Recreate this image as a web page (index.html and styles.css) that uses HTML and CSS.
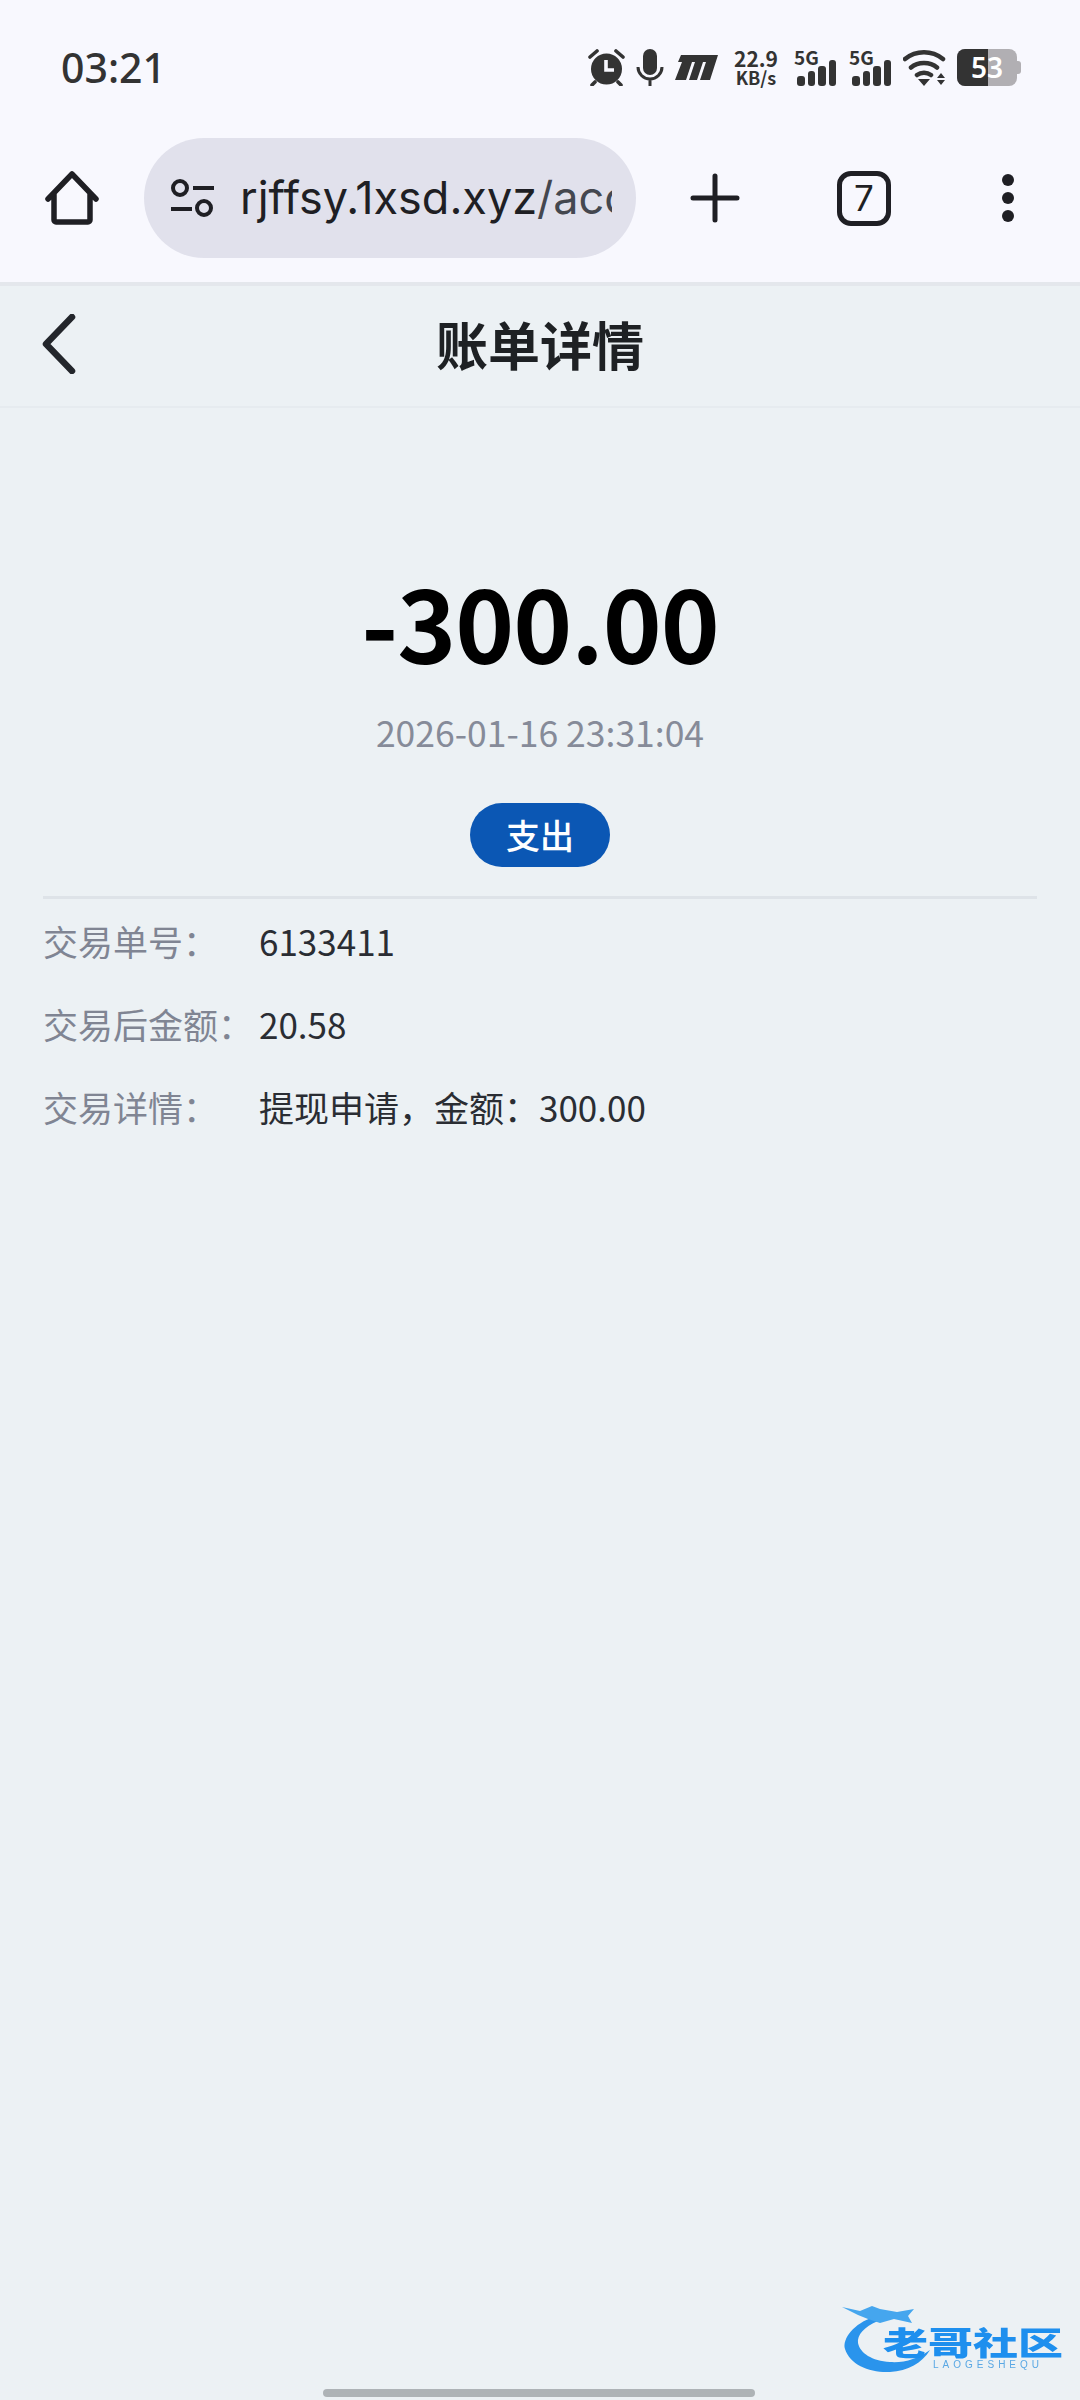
FILE: index.html

```html
<!DOCTYPE html>
<html lang="zh">
<head>
  <meta charset="utf-8">
  <title>账单详情</title>
  <link rel="stylesheet" href="styles.css">
</head>
<body>

<div class="browser">
  <div class="status">
    <span class="time">03:21</span>
    <div class="status-icons">
      <svg width="37" height="37" viewBox="0 0 37 37"><circle cx="18.500" cy="20" r="15.500" fill="#333"/><path d="M18 11v10h8" fill="none" stroke="#f8f8fe" stroke-width="3.600"/><path d="M2 8l7-6M35 8l-7-6M7 33l-3 3M30 33l3 3" stroke="#333" stroke-width="3.600" stroke-linecap="round"/></svg>
      <svg class="mic" width="28" height="37" viewBox="0 0 28 37"><rect x="7" y="0" width="14" height="26" rx="7" fill="#333"/><path d="M2 18a12 12 0 0 0 24 0M14 30v7" fill="none" stroke="#333" stroke-width="3"/></svg>
      <svg class="moto" width="43" height="25" viewBox="0 0 43 25"><path d="M6 0h37l-8 25H25l6-18h-3L22 25h-8l6-18h-3L11 25H0L7 7H3z" fill="#333"/></svg>
      <div class="speed"><span>22.9</span><span>KB/s</span></div>
      <div class="signal">
        <span class="net">5G</span>
        <div class="bars"><i class="b1"></i><i class="b2"></i><i class="b3"></i><i class="b4"></i></div>
      </div>
      <div class="signal">
        <span class="net">5G</span>
        <div class="bars"><i class="b1"></i><i class="b2"></i><i class="b3"></i><i class="b4"></i></div>
      </div>
      <svg class="wifi" width="44" height="37" viewBox="0 0 44 37"><path d="M2 10c11-9 27-9 38 0M8 18.500c7-6 19-6 26 0M14 26c4-3 10-3 14 0" fill="none" stroke="#333" stroke-width="4.500" stroke-linecap="round"/><path d="M15 30h12l-6 7zM38 24l4 5h-8zM38 36l4-5h-8z" fill="#333"/></svg>
      <div class="battery"><span class="batt-level"></span><span class="batt-text">53</span><span class="batt-nub"></span></div>
    </div>
  </div>

  <div class="toolbar">
    <svg class="home" width="56" height="58" viewBox="0 0 56 58"><path d="M4 30L28 5l24 25M10 24v27a2 2 0 0 0 2 2h32a2 2 0 0 0 2-2V24" fill="none" stroke="#1f1f24" stroke-width="5.500" stroke-linecap="round" stroke-linejoin="round"/></svg>
    <div class="urlbar">
      <svg width="44" height="38" viewBox="0 0 44 38"><circle cx="10" cy="9" r="7" fill="none" stroke="#1f1f24" stroke-width="4"/><path d="M23 9h21M1 30h21" stroke="#1f1f24" stroke-width="4"/><circle cx="34" cy="29" r="7" fill="none" stroke="#1f1f24" stroke-width="4"/></svg>
      <span class="url"><b>rjffsy.1xsd.xyz</b>/acc</span>
    </div>
    <svg class="plus" width="50" height="50" viewBox="0 0 50 50"><path d="M25 3v44M3 25h44" stroke="#1f1f24" stroke-width="5" stroke-linecap="round"/></svg>
    <div class="tabs">7</div>
    <div class="dots"><i></i><i></i><i></i></div>
  </div>
</div>

<div class="page-head">
  <svg class="back" width="36" height="60" viewBox="0 0 36 60"><path d="M31 3L5 30l26 27" fill="none" stroke="#23262b" stroke-width="6.500" stroke-linecap="round" stroke-linejoin="round"/></svg>
  <h1>账单详情</h1>
</div>

<div class="summary">
  <div class="amount">-300.00</div>
  <div class="date">2026-01-16 23:31:04</div>
  <span class="tag">支出</span>
</div>

<div class="details">
  <div class="row"><span class="label">交易单号：</span><span class="value">6133411</span></div>
  <div class="row"><span class="label">交易后金额：</span><span class="value">20.58</span></div>
  <div class="row"><span class="label">交易详情：</span><span class="value">提现申请，金额：300.00</span></div>
</div>

<div class="watermark">
  <svg width="90" height="70" viewBox="0 0 90 70"><path d="M32 14C12 20 0 36 3 46C8 62 28 70 48 69C66 68 80 60 88 47C76 56 62 60 48 59C30 58 18 50 16 40C15 32 22 24 36 18z" fill="#2a94ec"/><path d="M0 4L18 8L30 3L38 6L55 9L72 6L66 13L70 20L52 16L38 20L26 16L16 12z" fill="#45a6ee"/></svg>
  <div class="wm-text">
    <span class="wm-cn">老哥社区</span>
    <span class="wm-en">LAOGESHEQU</span>
  </div>
</div>

<div class="nav-pill"></div>

</body>
</html>
```

FILE: styles.css

```css
* {
  box-sizing: border-box;
}
html, body {
  margin: 0;
  padding: 0;
}
body {
  width: 1080px;
  height: 2400px;
  background-color: #ecf1f4;
  font-family: "Noto Sans CJK SC", "Noto Sans", sans-serif;
  position: relative;
  overflow: hidden;
}

/* browser chrome */
.browser {
  height: 286px;
  background-color: #f8f8fe;
  border-bottom: 4px solid #e4e7ec;
}
.status {
  height: 138px;
  padding: 44px 0 0 61px;
  display: flex;
  justify-content: space-between;
  align-items: flex-start;
}
.time {
  font-family: "Noto Sans", sans-serif;
  font-size: 41px;
  font-weight: 500;
  line-height: 46px;
  color: #333;
}
.status-icons {
  display: flex;
  align-items: flex-end;
  height: 37px;
  margin-top: 5px;
  padding-right: 63px;
}
.mic {
  margin-left: 11px;
}
.moto {
  margin-left: 11px;
  margin-bottom: 6px;
}
.speed {
  display: flex;
  flex-direction: column;
  align-items: center;
  width: 44px;
  margin-left: 16px;
  font-weight: 700;
  color: #333;
}
.speed span:first-child {
  font-size: 21px;
  line-height: 19px;
}
.speed span:last-child {
  font-size: 18px;
  line-height: 18px;
}
.signal {
  position: relative;
  width: 42px;
  height: 37px;
  margin-left: 16px;
}
.signal + .signal {
  margin-left: 13px;
}
.net {
  position: absolute;
  left: 0;
  top: -3px;
  font-size: 19px;
  font-weight: 700;
  line-height: 22px;
  color: #333;
}
.bars {
  position: absolute;
  right: 0;
  bottom: 0;
  display: flex;
  align-items: flex-end;
  gap: 3px;
}
.bars i {
  display: block;
  width: 7.500px;
  background-color: #333;
  border-radius: 3px;
}
.b1 { height: 10px; }
.b2 { height: 15px; }
.b3 { height: 20px; }
.b4 { height: 26px; }
.wifi {
  margin-left: 12px;
}
.battery {
  position: relative;
  width: 60px;
  height: 37px;
  margin-left: 10px;
  background-color: #b1afb3;
  border-radius: 8px;
}
.batt-level {
  position: absolute;
  left: 0;
  top: 0;
  bottom: 0;
  width: 31px;
  background-color: #333;
  border-radius: 8px 0 0 8px;
}
.batt-text {
  position: absolute;
  inset: 0;
  text-align: center;
  color: #fff;
  font-family: "Noto Sans", sans-serif;
  font-size: 28px;
  font-weight: 600;
  line-height: 37px;
}
.batt-nub {
  position: absolute;
  right: -4px;
  top: 12px;
  width: 4px;
  height: 13px;
  background-color: #b1afb3;
  border-radius: 0 3px 3px 0;
}

.toolbar {
  height: 144px;
  display: flex;
  align-items: flex-start;
  padding-left: 44px;
}
.home {
  margin-top: 31px;
  flex: none;
}
.urlbar {
  width: 492px;
  height: 120px;
  flex: none;
  margin-left: 44px;
  padding: 0 24px 0 26px;
  display: flex;
  align-items: center;
  background-color: #e1e1ec;
  border-radius: 60px;
}
.urlbar svg {
  flex: none;
}
.url {
  margin-left: 26px;
  font-family: "Inter", "Roboto", sans-serif;
  font-size: 45px;
  line-height: 60px;
  color: #44474f;
  white-space: nowrap;
  overflow: hidden;
}
.url b {
  font-weight: 400;
  color: #1f1f24;
}
.plus {
  margin-left: 54px;
  margin-top: 35px;
  flex: none;
}
.tabs {
  width: 54px;
  height: 55px;
  flex: none;
  margin-left: 97px;
  margin-top: 33px;
  border: 5px solid #1f1f24;
  border-radius: 14px;
  text-align: center;
  font-family: "Inter", "Roboto", sans-serif;
  font-size: 35px;
  line-height: 45px;
  color: #1f1f24;
}
.dots {
  margin-left: 111px;
  margin-top: 36px;
  display: flex;
  flex-direction: column;
  gap: 6px;
}
.dots i {
  display: block;
  width: 12px;
  height: 12px;
  background-color: #1f1f24;
  border-radius: 50%;
}

/* page */
.page-head {
  position: relative;
  height: 122px;
  padding-bottom: 5px;
  display: flex;
  align-items: center;
  justify-content: center;
  border-bottom: 2px solid #e6ebef;
}
.back {
  position: absolute;
  left: 41px;
  top: 28px;
}
.page-head h1 {
  margin: 0;
  font-size: 52px;
  font-weight: 700;
  color: #1e2124;
}
.summary {
  display: flex;
  flex-direction: column;
  align-items: center;
  margin: 0 43px;
  padding: 153px 0 29px;
  border-bottom: 3px solid #dee3e8;
}
.amount {
  font-size: 100px;
  font-weight: 700;
  letter-spacing: -1px;
  line-height: 120px;
  color: #000;
}
.date {
  margin-top: 26px;
  font-size: 35.500px;
  line-height: 50px;
  color: #868b99;
}
.tag {
  width: 140px;
  height: 64px;
  margin-top: 46px;
  background-color: #0b57b4;
  border-radius: 32px;
  color: #fff;
  font-size: 34px;
  font-weight: 500;
  line-height: 64px;
  text-align: center;
}
.details {
  padding: 0 43px;
}
.row {
  display: flex;
  height: 83px;
  align-items: center;
  font-size: 35px;
}
.label {
  width: 216px;
  flex: none;
  color: #808593;
}
.value {
  color: #2a2d33;
}

/* watermark in the corner */
.watermark {
  position: absolute;
  left: 842px;
  top: 2303px;
  display: flex;
  filter: blur(0.6px);
}
.watermark svg {
  flex: none;
}
.wm-text {
  display: flex;
  flex-direction: column;
  margin-left: -49px;
  padding-top: 20px;
}
.wm-cn {
  font-size: 45px;
  font-weight: 900;
  line-height: 36px;
  color: #1e8fee;
  white-space: nowrap;
  transform: scaleY(0.72);
}
.wm-en {
  margin-top: 1px;
  padding-left: 50px;
  font-family: "Liberation Sans", sans-serif;
  font-size: 10px;
  letter-spacing: 4px;
  line-height: 10px;
  color: #5aa8e4;
  white-space: nowrap;
}
.nav-pill {
  position: absolute;
  left: 323px;
  top: 2389px;
  width: 432px;
  height: 8px;
  background-color: #aeb3b6;
  border-radius: 4px;
}
```
